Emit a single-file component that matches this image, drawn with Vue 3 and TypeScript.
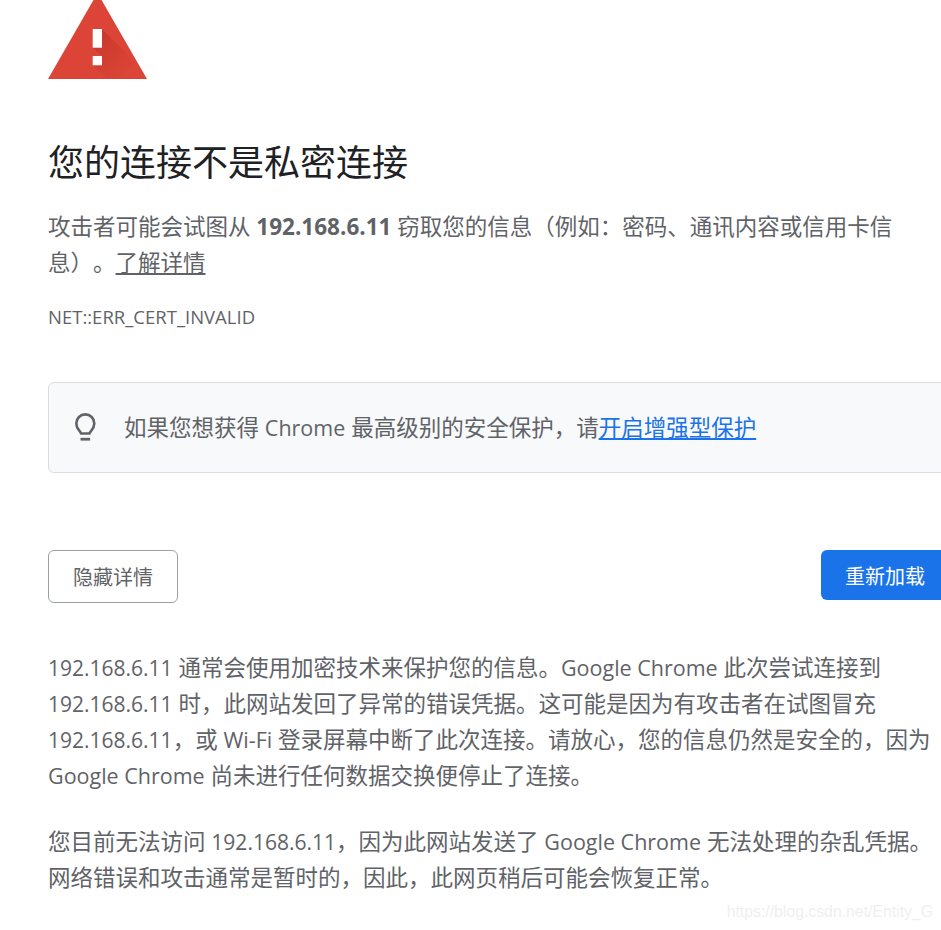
<template>
  <div class="page">
    <div class="content">
      <svg class="warn-icon" width="99" height="79" viewBox="48 0 99 79" aria-hidden="true">
        <defs>
          <linearGradient id="warnShade" x1="0" y1="0" x2="1" y2="1">
            <stop offset="0" stop-color="#a52714" stop-opacity="0.42" />
            <stop offset="0.75" stop-color="#a52714" stop-opacity="0" />
          </linearGradient>
        </defs>
        <polygon points="48,79 147,79 97.5,-7" fill="#db4437" />
        <polygon points="102,29 128,55 147,79 107,79 92.700,65 102,56 92.700,47.700" fill="url(#warnShade)" />
        <rect x="92.700" y="29" width="9.300" height="18.700" fill="#fff" />
        <rect x="92.700" y="56" width="9.300" height="9.300" fill="#fff" />
      </svg>

      <h1 class="title">您的连接不是私密连接</h1>
      <p class="lead">
        攻击者可能会试图从 <strong>192.168.6.11</strong> 窃取您的信息（例如：密码、通讯内容或信用卡信息）。<a class="learn">了解详情</a>
      </p>
      <div class="code">NET::ERR_CERT_INVALID</div>

      <div class="enhanced">
        <svg class="bulb" width="25" height="30" viewBox="0 0 25 30" aria-hidden="true">
          <path d="M8 20.500c0-2.300-4.700-4-4.700-10.100a9 9 0 0 1 18 0c0 6.100-4.700 7.800-4.700 10.100z" fill="none" stroke="#5f6368" stroke-width="2.600" stroke-linejoin="round" />
          <rect x="7.500" y="24.800" width="9.600" height="2.800" fill="#5f6368" />
        </svg>
        <span>如果您想获得 <span class="en">Chrome</span> 最高级别的安全保护，请<a class="link">开启增强型保护</a></span>
      </div>

      <div class="actions">
        <button class="btn details">隐藏详情</button>
        <button class="btn reload">重新加载</button>
      </div>

      <p class="detail"><span class="ip">192.168.6.11</span> 通常会使用加密技术来保护您的信息。<span class="en">Google Chrome</span> 此次尝试连接到 <span class="ip">192.168.6.11</span> 时，此网站发回了异常的错误凭据。这可能是因为有攻击者在试图冒充 <span class="ip">192.168.6.11</span>，或 <span class="en">Wi-Fi</span> 登录屏幕中断了此次连接。请放心，您的信息仍然是安全的，因为 <span class="en">Google Chrome</span> 尚未进行任何数据交换便停止了连接。</p>
      <p class="detail">您目前无法访问 <span class="ip">192.168.6.11</span>，因为此网站发送了 <span class="en">Google Chrome</span> 无法处理的杂乱凭据。网络错误和攻击通常是暂时的，因此，此网页稍后可能会恢复正常。</p>
    </div>
    <div class="watermark">https://blog.csdn.net/Entity_G</div>
  </div>
</template>

<script setup lang="ts">
</script>

<style scoped>
.page {
  position: relative;
  width: 941px;
  height: 930px;
  overflow: hidden;
  background: #fff;
  font-family: "Open Sans", "Noto Sans CJK SC", sans-serif;
  color: #5f6368;
  font-size: 22.5px;
  line-height: 36px;
  text-spacing-trim: space-all;
}

.content {
  width: 901px;
  padding-left: 48px;
}

.warn-icon {
  display: block;
}

.title {
  margin: 59px 0 0;
  color: #202124;
  font-size: 36px;
  font-weight: 400;
  line-height: 50px;
}

.lead {
  margin: 21px 0 0;
}

.lead strong {
  font-weight: 700;
}

.ip {
  font-size: 21px;
}

.en {
  font-size: 21.500px;
}

.learn {
  color: #5f6368;
  text-decoration: underline;
}

.code {
  margin-top: 18px;
  font-size: 18.500px;
  line-height: 36px;
}

.enhanced {
  display: flex;
  align-items: center;
  gap: 26px;
  box-sizing: border-box;
  height: 91px;
  margin-top: 47px;
  padding-left: 24px;
  background: #f8f9fa;
  border: 1px solid #dadce0;
  border-radius: 6px;
}

.bulb {
  flex: none;
}

.link {
  color: #1a73e8;
  text-decoration: underline;
}

.actions {
  display: flex;
  justify-content: space-between;
  align-items: flex-start;
  margin-top: 77px;
}

.btn {
  font-family: inherit;
  font-size: 20px;
  line-height: 28px;
  padding: 3px 24px 0;
  border-radius: 6px;
}

.details {
  width: 130px;
  height: 53px;
  background: #fff;
  color: #5f6368;
  border: 1px solid #9aa0a6;
}

.reload {
  height: 50px;
  background: #1a73e8;
  color: #fff;
  border: none;
  font-weight: 400;
}

.detail {
  margin: 47px 0 0;
}

.detail + .detail {
  margin-top: 30px;
}

.watermark {
  position: absolute;
  right: 8px;
  bottom: 6px;
  font-family: "Liberation Sans", Arial, sans-serif;
  font-size: 15.800px;
  line-height: 24px;
  color: #efefef;
}
</style>
